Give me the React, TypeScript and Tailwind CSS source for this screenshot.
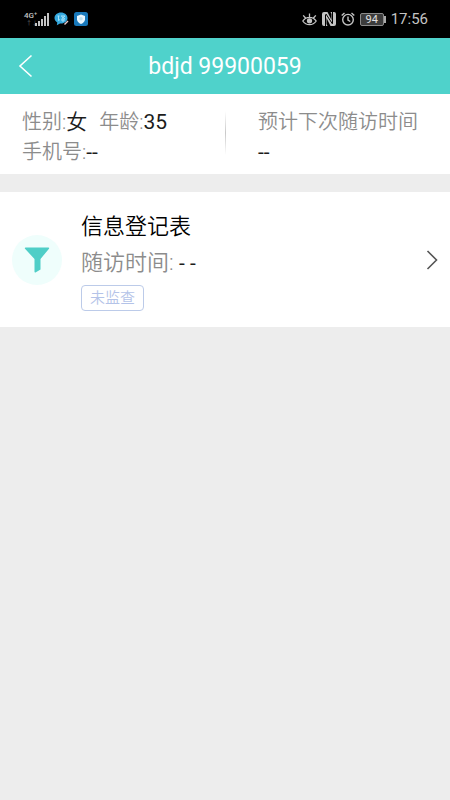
import type { ReactNode } from 'react'

const signalBars = [3, 5, 7, 10, 13]

function StatusBar() {
  return (
    <div className="flex h-[38px] items-center justify-between bg-black pl-6 pr-[22px] font-normal text-[#c4c4c4]">
      <div className="flex items-center gap-[5px]">
        <div className="flex items-end">
          <div className="flex w-[11px] flex-col text-[8px] font-medium leading-[8px]">
            <span>4G⁺</span>
            <span className="pl-[2px] text-[6px] leading-[6px] text-[#555555]">↑↓</span>
          </div>
          <div className="flex items-end gap-px">
            {signalBars.map((height) => (
              <span key={height} className="w-[2px] bg-[#c4c4c4]" style={{ height }} />
            ))}
          </div>
        </div>
        <svg width="15" height="14" viewBox="0 0 15 14" fill="none">
          <path d="M7 .5c3.6 0 6.5 2.4 6.5 5.6 0 3.1-2.900 5.500-6.500 5.500l-1 0-3.200 1.600.5-2.700C1.500 9.600.500 8 .500 6.100.500 2.900 3.400.500 7 .500Z" fill="#35a9df" />
          <path d="M3.500 4h2M4.500 4v4.500l1.500-1M7 4h4l-3.500 3M7.500 4.500l3.500 2.500M7 8h4M9 6.500V10" stroke="#a5e3fa" />
          <path d="m10.500 12.500 3.500-3.500" stroke="#e8c9cc" strokeWidth="1.500" />
        </svg>
        <svg width="14" height="14" viewBox="0 0 14 14">
          <rect width="14" height="14" rx="2.500" fill="#1878ba" />
          <path d="M7 2.500 11 4v3.200c0 2.300-1.600 3.700-4 4.800-2.400-1.100-4-2.500-4-4.800V4Z" fill="#e9f7ff" />
          <circle cx="7" cy="6.800" r="1.800" fill="#bfe1ee" />
        </svg>
      </div>
      <div className="flex items-center gap-[5px]">
        <svg width="15" height="14" viewBox="0 0 15 14" fill="none" stroke="currentColor" strokeWidth="1.300">
          <path d="M.8 9c1.700-2.500 3.900-3.700 6.700-3.700S12.500 6.500 14.200 9c-1.700 2.500-3.900 3.700-6.700 3.700S2.500 11.500.8 9ZM7.500 5V1.500M3.500 6 1.200 3.300M11.500 6l2.300-2.700" />
          <circle cx="7.500" cy="8.800" r="2" fill="currentColor" />
        </svg>
        <svg width="14" height="14" viewBox="0 0 14 14" fill="none">
          <path d="M2 0h3.500L9.500 8V2L8.500 0H12q2 0 2 2v10q0 2-2 2H8.500L4.500 6v6l1 2H2q-2 0-2-2V2Q0 0 2 0Z" fill="currentColor" />
          <path d="M3.500 14V2.500M10.500 11.500V0M4 2l6.500 10" stroke="#000000" strokeWidth="1" />
        </svg>
        <svg width="14" height="14" viewBox="0 0 14 14" fill="none" stroke="currentColor" strokeWidth="1.400">
          <circle cx="7" cy="7.700" r="5.300" />
          <path d="M7 4.500V8l2.300 1.500M.700 3.500 3.500 1M13.300 3.500 10.500 1" />
        </svg>
        <div className="flex items-center">
          <span className="flex h-[13px] w-6 items-center justify-center rounded-xs border border-[#8a8a8a] bg-[#3c3c3c] text-[11px] leading-none text-[#e0e0e0]">
            94
          </span>
          <span className="h-[7px] w-[2px] bg-[#aaaaaa]" />
        </div>
        <span className="text-[15px] leading-none">17:56</span>
      </div>
    </div>
  )
}

function Value({ children }: { children: ReactNode }) {
  return <span className="font-['Roboto','Noto_Sans_CJK_SC_DemiLight','Noto_Sans_CJK_SC',sans-serif] text-[21px] font-normal text-[#1c1c1c]">{children}</span>
}

export default function App() {
  return (
    <div className="min-h-screen bg-[#ededed] font-['Roboto','Noto_Sans_CJK_SC',sans-serif] font-[350]">
      <StatusBar />

      <header className="grid h-14 grid-cols-[48px_1fr_48px] items-center bg-[#4fd2cb] text-white">
        <button type="button" aria-label="返回" className="flex h-full items-center pl-[18px]">
          <svg width="15" height="24" viewBox="0 0 15 24" fill="none" stroke="currentColor" strokeWidth="1.600">
            <path d="M13.500 1.500 2 12l11.500 10.500" />
          </svg>
        </button>
        <h1 className="pt-[2px] text-center text-[23px] font-normal leading-7">bdjd 99900059</h1>
      </header>

      <section className="flex items-start bg-white pb-[7px] pt-[13px] text-xl leading-[30px] text-[#8c8c8c]">
        <div className="w-1/2 pl-[22px]">
          <div className="flex gap-3">
            <span>
              性别:<span className="text-[21px] text-[#1c1c1c]">女</span>
            </span>
            <span>
              年龄:<Value>35</Value>
            </span>
          </div>
          <p>
            手机号:<Value>--</Value>
          </p>
        </div>
        <div className="mt-1 h-11 w-px bg-linear-to-b from-white via-[#c9c9c9] to-white" />
        <div className="flex-1 pl-8">
          <p>预计下次随访时间</p>
          <p>
            <Value>--</Value>
          </p>
        </div>
      </section>

      <main className="mt-[18px]">
        <button type="button" className="flex w-full items-center bg-white px-3 pb-4 pt-[17px] text-left">
          <span className="flex size-[50px] shrink-0 items-center justify-center rounded-full bg-[#effefc]">
            <svg width="26" height="26" viewBox="0 0 26 26" fill="#4fcec7">
              <path d="M1.500.500h23q1.200 0 .5 1.200L16.500 12v10.500l-5 3q-1 .3-1-.7V12L1 1.700Q.300.500 1.500.500Z" />
            </svg>
          </span>
          <span className="ml-[19px] flex flex-1 flex-col items-start">
            <span className="text-[22px] leading-9 text-black">信息登记表</span>
            <span className="text-[22px] leading-9 text-[#8c8c8c]">
              随访时间: <Value>- -</Value>
            </span>
            <span className="mt-1 rounded-[4px] border border-[#bccbe9] px-2 text-[15px] leading-6 text-[#b4c3e8]">
              未监查
            </span>
          </span>
          <svg width="12" height="20" viewBox="0 0 12 20" fill="none" stroke="#555555" strokeWidth="1.600">
            <path d="m1.500 1 9 9-9 9" />
          </svg>
        </button>
      </main>
    </div>
  )
}
